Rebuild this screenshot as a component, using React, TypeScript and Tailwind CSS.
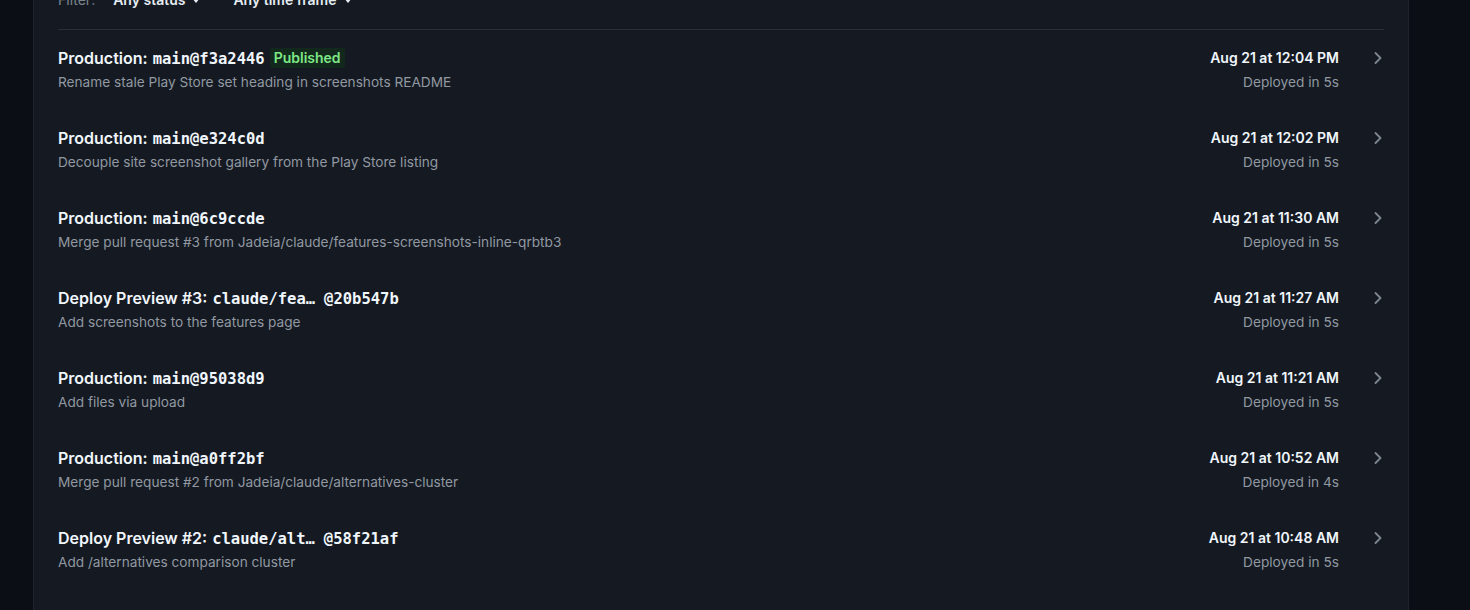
import React from "react";
import { ChevronRight } from "lucide-react";

type Deploy = {
  kind: string;
  branch?: string;
  ref: string;
  message: string;
  date: string;
  took: string;
  published?: boolean;
};

const deploys: Deploy[] = [
  { kind: "Production:", ref: "main@f3a2446", message: "Rename stale Play Store set heading in screenshots README", date: "Aug 21 at 12:04 PM", took: "Deployed in 5s", published: true },
  { kind: "Production:", ref: "main@e324c0d", message: "Decouple site screenshot gallery from the Play Store listing", date: "Aug 21 at 12:02 PM", took: "Deployed in 5s" },
  { kind: "Production:", ref: "main@6c9ccde", message: "Merge pull request #3 from Jadeia/claude/features-screenshots-inline-qrbtb3", date: "Aug 21 at 11:30 AM", took: "Deployed in 5s" },
  { kind: "Deploy Preview #3:", branch: "claude/fea…", ref: "@20b547b", message: "Add screenshots to the features page", date: "Aug 21 at 11:27 AM", took: "Deployed in 5s" },
  { kind: "Production:", ref: "main@95038d9", message: "Add files via upload", date: "Aug 21 at 11:21 AM", took: "Deployed in 5s" },
  { kind: "Production:", ref: "main@a0ff2bf", message: "Merge pull request #2 from Jadeia/claude/alternatives-cluster", date: "Aug 21 at 10:52 AM", took: "Deployed in 4s" },
  { kind: "Deploy Preview #2:", branch: "claude/alt…", ref: "@58f21af", message: "Add /alternatives comparison cluster", date: "Aug 21 at 10:48 AM", took: "Deployed in 5s" },
];

const mono = "font-['DejaVu_Sans_Mono',monospace] text-[15.5px] font-bold";

const Caret = () => (
  <svg width="8" height="5" viewBox="0 0 8 5" className="ml-[7px]">
    <path d="M0 0h8L4 5z" fill="#e6edf3" />
  </svg>
);

const App = () => {
  return (
    <div className="h-[610px] w-[1470px] overflow-hidden bg-[#0b0f15] font-['Inter',sans-serif]">
      <div className="ml-[33px] h-[660px] w-[1376px] border-x border-[#1f242c] bg-[#151a22] px-6 -mt-[29px]">
        <div className="flex h-[59px] items-center border-b border-[#2a2f37] text-sm">
          <span className="text-[#7d8590]">Filter:</span>
          <span className="ml-[18px] flex items-center font-semibold text-[#e6edf3]">
            Any status
            <Caret />
          </span>
          <span className="ml-[33px] flex items-center font-semibold text-[#e6edf3]">
            Any time frame
            <Caret />
          </span>
        </div>

        {deploys.map((d, i) => (
          <div key={i} className="flex h-20 items-start pt-[16px]">
            <div className="min-w-0 flex-1">
              <div className="flex h-6 items-baseline leading-6 text-base font-semibold text-[#f0f6fc]">
                <span>{d.kind}</span>
                {d.branch && <span className={`ml-[5px] ${mono}`}>{d.branch}</span>}
                <span className={`${d.branch ? "ml-[9px]" : "ml-[5px]"} ${mono}`}>{d.ref}</span>
                {d.published && (
                  <span className="ml-[5px] self-center rounded-[3px] bg-[#12281c] px-[4px] text-sm font-semibold leading-5 text-[#7ee787]">
                    Published
                  </span>
                )}
              </div>
              <div className="mt-[2px] text-[13.65px] leading-5 text-[#9198a1]">{d.message}</div>
            </div>
            <div className="text-right">
              <div className="flex h-6 items-center justify-end text-sm font-semibold text-[#f0f6fc]">{d.date}</div>
              <div className="mt-[2px] text-[13.7px] leading-5 text-[#9198a1]">{d.took}</div>
            </div>
            <div className="ml-[29px] -mr-[4px] flex h-6 items-center">
              <ChevronRight size={20} strokeWidth={2.2} className="text-[#7d8590]" />
            </div>
          </div>
        ))}
      </div>
    </div>
  );
};

export default App;
